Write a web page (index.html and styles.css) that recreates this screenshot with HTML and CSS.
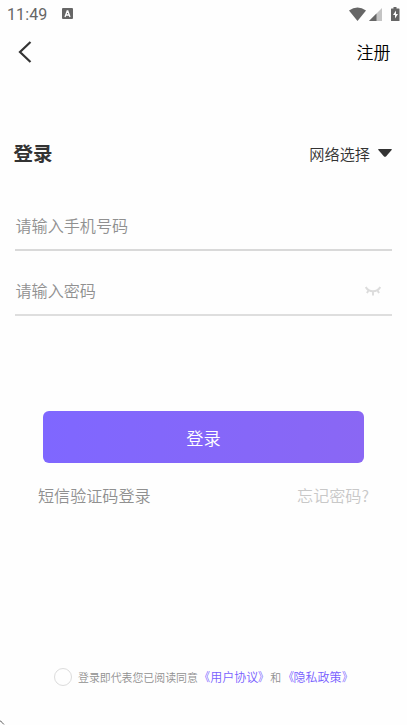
FILE: index.html
```html
<!DOCTYPE html>
<html lang="zh-CN">
<head>
<meta charset="utf-8">
<title>登录</title>
<link rel="stylesheet" href="styles.css">
</head>
<body>
<div class="screen">
  <div class="status">
    <span class="clock">11:49</span>
    <svg class="notice" width="11" height="12" viewBox="0 0 11 12"><rect width="11" height="11" rx="1" fill="#666"/><path d="M3 9L5.200 3h.6L8 9M3.700 7h3.600" fill="none" stroke="#fff" stroke-width="1.300"/></svg>
    <svg class="signals" width="52" height="15" viewBox="0 0 52 15">
      <path d="M0 3.500Q8.500-2.500 17 3.500L8.500 14Z" fill="#666"/>
      <path d="M33 1V14H20Z" fill="#c4c4c4"/><path d="M27.500 6.500V14H20Z" fill="#666"/>
      <path d="M44.500 0h3v1.500H50q.500 0 .500.500V13.500q0 .500-.500.500H42.500q-.500 0-.500-.500V2q0-.500.500-.500h2Z" fill="#666"/>
      <path d="M47 3.500L44 8h2v3.500L49 7h-2Z" fill="#fff"/>
    </svg>
  </div>
  <header class="header">
    <svg width="14" height="22" viewBox="0 0 14 22"><path d="M12.500 1L2 11L12.500 21" fill="none" stroke="#333" stroke-width="2.200"/></svg>
    <span class="register">注册</span>
  </header>
  <div class="heading">
    <h1>登录</h1>
    <div class="network"><span>网络选择</span><svg width="14" height="8" viewBox="0 0 14 8"><path d="M.7 0H13.300q.9.200.3 1L8.200 7.200Q7 8.400 5.800 7.200L.4 1Q-.2.200.7 0Z" fill="#333"/></svg></div>
  </div>
  <div class="fields">
    <div class="field phone">请输入手机号码</div>
    <div class="field password"><span>请输入密码</span>
      <svg class="eye" width="16" height="10" viewBox="0 0 16 10"><path d="M.7 1Q3 5.200 8 5.200T15.300 1M3.600 4L2 7.200M8 5.200V9.500M12.400 4L14 7.200" fill="none" stroke="#dcdcdc" stroke-width="1.900"/></svg>
    </div>
  </div>
  <div class="submit">登录</div>
  <div class="options"><span>短信验证码登录</span><span class="forgot">忘记密码?</span></div>
  <footer class="agreement"><i class="radio"></i><span>登录即代表您已阅读同意</span><span class="link"><span class="mark open">《</span>用户协议<span class="mark close">》</span></span><span>和</span><span class="link"><span class="mark open">《</span>隐私政策<span class="mark close">》</span></span></footer>
  <svg class="corner" width="5" height="5" viewBox="0 0 5 5"><path d="M0 .5L4 4.500" stroke="#222" stroke-dasharray="2 .6"/></svg>
</div>
</body>
</html>
```
FILE: styles.css
```css
* { box-sizing: border-box; }
body { margin: 0; background: #fefefe; font-family: "Noto Sans CJK SC", sans-serif; font-weight: 350; color: #333; }
svg { display: block; flex: none; }
.screen { position: relative; height: 725px; display: flex; flex-direction: column; overflow: hidden; white-space: nowrap; }
.status { height: 28px; display: flex; align-items: center; padding: 0 7px; color: #666; }
.clock { font: 16px/28px Roboto, sans-serif; width: 55px; letter-spacing: .1px; padding-top: 1px; }
.signals { margin: 0 -1px 0 auto; }
.header { height: 48px; display: flex; align-items: center; justify-content: space-between; padding: 0 16.5px 0 18px; }
.register { font-size: 17px; line-height: 24px; color: #000; }
.heading { height: 30px; margin-top: 62px; display: flex; align-items: center; justify-content: space-between; padding: 0 15px 0 13.5px; }
h1 { margin: 0; font-size: 19.5px; line-height: 30px; font-weight: 700; }
.network { display: flex; align-items: center; gap: 8px; font-size: 15.2px; line-height: 24px; }
.fields { margin: 34px 15px 0; }
.field { display: flex; align-items: center; padding: 0 11.5px 0 .5px; color: #909090; font-size: 16.1px; line-height: 24px; }
.phone { height: 49px; padding-bottom: 1px; border-bottom: 2px solid #d9d9d9; }
.password { height: 65px; padding-top: 15px; justify-content: space-between; border-bottom: 2px solid #dedede; }
.eye { margin-top: 2px; }
.submit { height: 52px; margin: 95px 43px 0; border-radius: 6px; background: linear-gradient(90deg, #7f67ff, #8a67f4); color: #fff; font-size: 17.2px; line-height: 53px; text-align: center; }
.options { margin: 20px 38px 0 38px; display: flex; justify-content: space-between; font-size: 16.1px; line-height: 24px; color: #909090; }
.forgot { color: #c8c8c8; }
.agreement { margin: auto 0 38px 54px; height: 20px; display: flex; align-items: center; color: #909090; font-size: 10.9px; line-height: 20px; }
.radio { width: 18px; height: 18px; margin-right: 6px; border: 1px solid #dcdcdc; border-radius: 50%; }
.link { color: #7860ff; font-size: 12px; margin-left: .4px; }
.mark { display: inline-block; width: 12px; }
.open { transform: scaleX(.88); transform-origin: right; }
.close { transform: scaleX(.88); transform-origin: left; }
.corner { position: absolute; left: 0; bottom: 0; }
```
